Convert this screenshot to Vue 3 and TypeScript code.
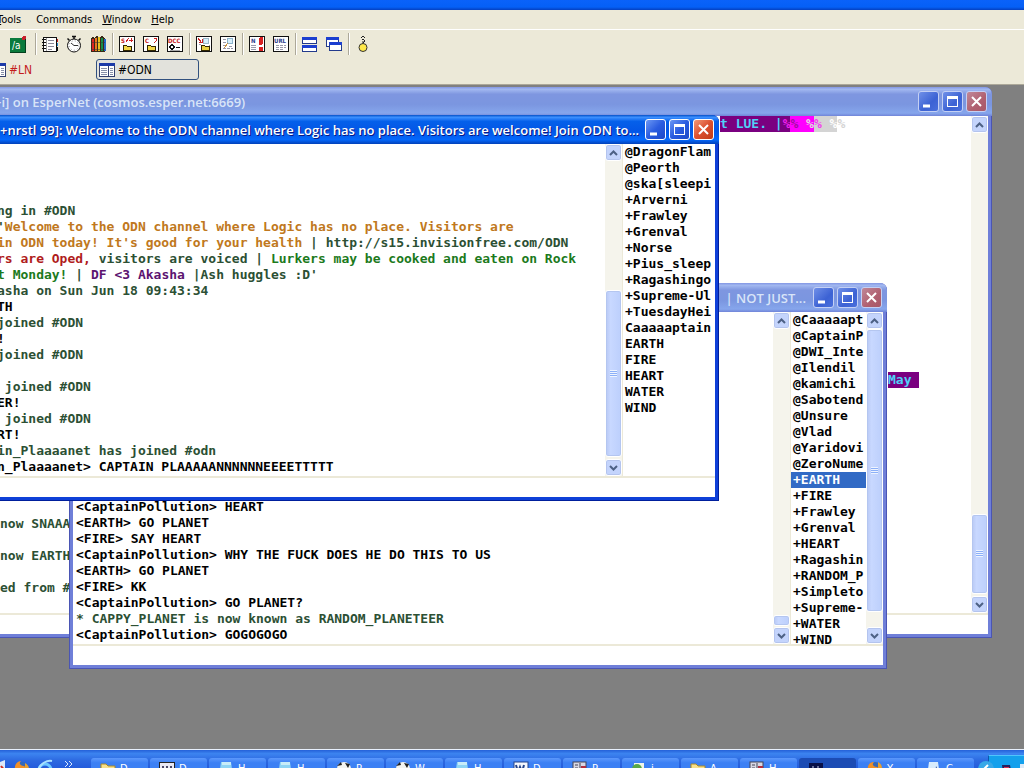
<script setup lang="ts">
interface Seg { t: string; c?: string; indent?: number }
interface Bar { before: number; size: number; after: number; grip: boolean }
interface Win {
  id: string
  title: string
  active: boolean
  lines: Seg[][]
  bar: Bar
  users: string[]
  userBar?: Bar
}

const line = (t = '', c = ''): Seg[] => [{ t, c }]
const green = (t: string) => line(t, 'green')
const blank = (n: number): Seg[][] => Array.from({ length: n }, () => line())

const windows: Win[] = [
  {
    id: 'status',
    title: '+i] on EsperNet (cosmos.esper.net:6669)',
    active: false,
    lines: [
      [
        { t: 't LUE. |', c: 'cy-pu', indent: 720 },
        { t: '%', c: 'ma-pu' },
        { t: '% ', c: 'pu-ma' },
        { t: '%', c: 'gr-ma' },
        { t: '% ', c: 'ma-gr' },
        { t: '%', c: 'wh-gr' },
        { t: '%', c: 'gr-wh' },
      ],
      ...blank(15),
      [{ t: 'May ', c: 'cy-pu', indent: 888 }],
      ...blank(8),
      green('now SNAAA'),
      ...blank(1),
      green('now EARTH'),
      ...blank(1),
      green('ed from #'),
      ...blank(1),
    ],
    bar: { before: 384, size: 79, after: 2, grip: true },
    users: [],
  },
  {
    id: 'planet',
    title: '| NOT JUST...',
    active: false,
    lines: [
      line('<CaptainPollution> HEART'),
      line('<EARTH> GO PLANET'),
      line('<FIRE> SAY HEART'),
      line('<CaptainPollution> WHY THE FUCK DOES HE DO THIS TO US'),
      line('<EARTH> GO PLANET'),
      line('<FIRE> KK'),
      line('<CaptainPollution> GO PLANET?'),
      green('* CAPPY_PLANET is now known as RANDOM_PLANETEER'),
      line('<CaptainPollution> GOGOGOGO'),
    ],
    bar: { before: 289, size: 9, after: 1, grip: false },
    users: [
      '@Caaaaapt', '@CaptainP', '@DWI_Inte', '@Ilendil', '@kamichi', '@Sabotend', '@Unsure',
      '@Vlad', '@Yaridovi', '@ZeroNume', '+EARTH', '+FIRE', '+Frawley', '+Grenval', '+HEART',
      '+Ragashin', '+RANDOM_P', '+Simpleto', '+Supreme-', '+WATER', '+WIND',
    ],
    userBar: { before: 0, size: 284, after: 15, grip: true },
  },
  {
    id: 'odn',
    title: '+nrstl 99]: Welcome to the ODN channel where Logic has no place. Visitors are welcome! Join ODN to...',
    active: true,
    lines: [
      green('ng in #ODN'),
      [{ t: "'", c: 'green' }, { t: 'Welcome to the ODN channel where Logic has no place. Visitors are', c: 'orange' }],
      [
        { t: "in ODN today! It's good for your health", c: 'orange' },
        { t: ' | http://s15.invisionfree.com/ODN', c: 'green' },
      ],
      [
        { t: 'rs are Oped,', c: 'red' },
        { t: ' visitors are voiced | ', c: 'green' },
        { t: 'Lurkers may be cooked and eaten on Rock', c: 'leaf' },
      ],
      [
        { t: 't Monday!', c: 'leaf' },
        { t: ' | ', c: 'green' },
        { t: 'DF <3 Akasha', c: 'violet' },
        { t: " |Ash huggles :D'", c: 'green' },
      ],
      green('asha on Sun Jun 18 09:43:34'),
      line('TH'),
      green('joined #ODN'),
      line('!'),
      green('joined #ODN'),
      line(),
      green(' joined #ODN'),
      line('ER!'),
      green(' joined #ODN'),
      line('RT!'),
      green('in_Plaaaanet has joined #odn'),
      line('n_Plaaaanet> CAPTAIN PLAAAAANNNNNNEEEETTTTT'),
    ],
    bar: { before: 130, size: 166, after: 2, grip: true },
    users: [
      '@DragonFlam', '@Peorth', '@ska[sleepi', '+Arverni', '+Frawley', '+Grenval', '+Norse',
      '+Pius_sleep', '+Ragashingo', '+Supreme-Ul', '+TuesdayHei', 'Caaaaaptain', 'EARTH', 'FIRE',
      'HEART', 'WATER', 'WIND',
    ],
  },
]

const tools: string[][] = [
  ['alias'],
  ['book', 'clock', 'crayons'],
  ['send', 'chat', 'dcc'],
  ['received', 'logs'],
  ['notify', 'url'],
  ['tile', 'cascade'],
  ['about'],
]

const tasks = [
  { k: 'folder', t: 'D...' }, { k: 'dev', t: 'D...' }, { k: 'note', t: 'H...' }, { k: 'note', t: 'H...' },
  { k: 'cow', t: 'P...' }, { k: 'cow', t: 'W...' }, { k: 'note', t: 'H...' }, { k: 'word', t: 'D...' },
  { k: 'book', t: 'P...' }, { k: 'green', t: 'i...' }, { k: 'folder', t: 'A...' }, { k: 'book', t: 'H...' },
  { k: 'lue', t: '' }, { k: 'fox', t: 'Y...' }, { k: 'doc', t: 'C...' },
]
</script>

<template>
  <div class="app">
    <div class="appbar"></div>
    <nav class="menu">
      <button type="button"><u>T</u>ools</button>
      <button type="button">Commands</button>
      <button type="button"><u>W</u>indow</button>
      <button type="button"><u>H</u>elp</button>
    </nav>
    <div class="toolbar">
      <div v-for="(group, gi) in tools" :key="gi" class="group">
        <button v-for="k in group" :key="k" type="button" class="tool" :aria-label="k">
          <svg width="18" height="18" viewBox="0 0 18 18" shape-rendering="crispEdges">
            <template v-if="k === 'alias'">
              <rect x="1" y="3" width="15" height="14" rx="1" fill="#0a7a3c" />
              <path d="M1 17h15V4" fill="none" stroke="#04401e" />
              <text x="3" y="14" class="alias">/a</text>
              <circle cx="15" cy="3" r="2" fill="#c8202c" />
            </template>
            <template v-else-if="k === 'book'">
              <rect x="2.5" y="2.5" width="13" height="14" rx="1" fill="#fff" stroke="#111" />
              <path d="M5.500 3v13" stroke="#999" />
              <path d="M7 5.500h6M7 8.500h6M7 11.500h6M7 14.500h4" stroke="#889" />
              <path d="M1 4.500h4M1 7.500h4M1 10.500h4M1 13.500h4" stroke="#111" />
              <path d="M16.500 4v3" stroke="#c22" /><path d="M16.500 8v3" stroke="#2a8ad0" /><path d="M16.500 12v4" stroke="#111" />
            </template>
            <template v-else-if="k === 'clock'">
              <g shape-rendering="auto">
                <path d="M7 1.500h4M9 1v3M2.500 3.500l2 2M15.500 3.500l-2 2" stroke="#111" stroke-width="1.500" />
                <circle cx="9" cy="10.500" r="6.500" fill="#fff" stroke="#111" />
                <path d="M9 10.500h4M9 10.500L6 8" stroke="#333" />
                <circle cx="9" cy="10.500" r="4.700" fill="none" stroke="#999" stroke-dasharray="1 2.200" />
              </g>
            </template>
            <template v-else-if="k === 'crayons'">
              <path d="M2 4l2-3 2 3 1-3h2l1 3 2-3h2l2 3v13H2z" fill="#3a2a18" />
              <path d="M3.500 4v12" stroke="#d22" stroke-width="2" /><path d="M6.500 3v13" stroke="#e87820" stroke-width="2" />
              <path d="M9.500 2v14" stroke="#e8c020" stroke-width="2" /><path d="M12.500 3v13" stroke="#169048" stroke-width="2" />
              <path d="M15.500 4v12" stroke="#2468c8" stroke-width="2" />
              <path d="M2 7.500h14M2 14.500h14" stroke="#333" stroke-opacity=".5" />
            </template>
            <template v-else-if="k === 'tile'">
              <rect x="1.500" y="2.500" width="14" height="6" fill="#fff" stroke="#223a8c" />
              <rect x="1.500" y="10.500" width="14" height="6" fill="#fff" stroke="#223a8c" />
              <path d="M1 3.500h15M1 11.500h15" stroke="#1c3fd0" stroke-width="3" />
            </template>
            <template v-else-if="k === 'cascade'">
              <rect x="1.500" y="2.500" width="12" height="9" fill="#fff" stroke="#223a8c" />
              <path d="M1 3.500h13" stroke="#1c3fd0" stroke-width="3" />
              <rect x="4.500" y="7.500" width="12" height="8" fill="#fff" stroke="#223a8c" />
              <path d="M4 8.500h13" stroke="#1c3fd0" stroke-width="3" />
            </template>
            <template v-else-if="k === 'about'">
              <g shape-rendering="auto">
                <path d="M7 3l2-2 2 2M8 5l1-1 2 2-2 2M9 6v3" fill="none" stroke="#222" />
                <circle cx="9" cy="12.500" r="4" fill="#ffe94a" stroke="#333" />
              </g>
            </template>
            <template v-else>
              <rect x="1.500" y="1.500" width="15" height="15" rx="1" fill="#fff" stroke="#111" />
              <template v-if="k === 'send' || k === 'chat'">
                <text x="3" y="8" class="mini red">{{ k === 'send' ? 'S' : 'C' }}</text>
                <path v-if="k === 'send'" d="M8 7l3-4M11 5h4M13 3v4" stroke="#c22" fill="none" />
                <path v-else d="M12 3h2v3l-2 2" stroke="#c22" fill="none" />
                <path d="M5 10h3l1 1h4v4H5z" fill="#f4d848" stroke="#332800" />
              </template>
              <template v-else-if="k === 'dcc'">
                <text x="2" y="8" class="mini red">DCC</text>
                <circle cx="6" cy="12" r="2" fill="#fff" stroke="#111" stroke-width="1.500" />
                <path d="M10 12.500h4" stroke="#111" />
                <path d="M4 15.500h10" stroke="#aaa" />
              </template>
              <template v-else-if="k === 'received'">
                <path d="M3 3l3 4M7 4v3H4" stroke="#c22" fill="none" />
                <circle cx="11" cy="6" r="3" fill="#d6eefa" stroke="#9ab8c8" />
                <path d="M4 9.500h2M14 10v4" stroke="#99a" />
                <path d="M6 10h3l1 1h4v4H6z" fill="#e8d040" stroke="#332800" />
              </template>
              <template v-else-if="k === 'logs'">
                <path d="M4 4.500h3M4 7.500h3M4 10.500h3M4 13.500h10M10 11.500h4" stroke="#99a" stroke-dasharray="3 1" />
                <circle cx="11" cy="6" r="3" fill="#d6eefa" stroke="#8cb4cc" />
                <path d="M9 8l-4 5" stroke="#c89040" />
              </template>
              <template v-else-if="k === 'notify'">
                <text x="3" y="8" class="mini">N</text>
                <path d="M3 10.500h5M3 12.500h5M3 14.500h5" stroke="#99a" />
                <rect x="11" y="2" width="4" height="8" rx="2" fill="#d82020" />
                <rect x="11" y="12" width="4" height="4" rx="1" fill="#d82020" />
              </template>
              <template v-else>
                <text x="2" y="8" class="mini">URL</text>
                <path d="M4 10.500h10M4 12.500h10M4 14.500h8" stroke="#99a" stroke-dasharray="3 1" />
              </template>
            </template>
          </svg>
        </button>
      </div>
    </div>
    <div class="switchbar">
      <button v-for="n in ['#LN', '#ODN']" :key="n" type="button" class="tab" :class="{ on: n === '#ODN' }">
        <svg width="16" height="14" viewBox="0 0 16 14" shape-rendering="crispEdges">
          <rect x=".5" y=".5" width="15" height="13" fill="#fff" stroke="#33406e" />
          <rect width="16" height="3" fill="#1c3aa8" />
          <path d="M2 5.500h6M2 7.500h6M2 9.500h6M2 11.500h6M11 5.500h3M11 7.500h3M11 9.500h3M11 11.500h3" stroke="#8890a8" />
          <path d="M9.500 3v11" stroke="#33406e" />
        </svg>
        {{ n }}
      </button>
    </div>

    <main class="desktop">
      <section v-for="w in windows" :key="w.id" class="win" :class="[w.id, { active: w.active }]">
        <header class="title">
          <span class="caption">{{ w.title }}</span>
          <button type="button" class="ctl" aria-label="Minimize">
            <svg width="19" height="19" viewBox="0 0 19 19"><path d="M4 14h7" stroke="#fff" stroke-width="3" /></svg>
          </button>
          <button type="button" class="ctl" aria-label="Maximize">
            <svg width="19" height="19" viewBox="0 0 19 19" shape-rendering="crispEdges">
              <rect x="4.500" y="4.500" width="10" height="10" fill="none" stroke="#fff" /><path d="M4 5.500h11" stroke="#fff" stroke-width="3" />
            </svg>
          </button>
          <button type="button" class="ctl close" aria-label="Close">
            <svg width="19" height="19" viewBox="0 0 19 19"><path d="M5 5l9 9M14 5l-9 9" stroke="#fff" stroke-width="2" /></svg>
          </button>
        </header>
        <div class="body">
          <div class="log">
            <p v-for="(l, i) in w.lines" :key="i"><span
              v-for="(s, j) in l" :key="j" :class="s.c"
              :style="s.indent ? { marginLeft: s.indent + 'px' } : undefined"
            >{{ s.t }}</span></p>
          </div>
          <template v-for="(b, bi) in [w.bar, w.userBar]" :key="bi">
            <ul v-if="bi === 1 && w.users.length" class="users">
              <li v-for="u in w.users" :key="u" :class="{ sel: w.id === 'planet' && u === '+EARTH' }">{{ u }}</li>
            </ul>
            <div v-if="b" class="scroll">
              <button type="button" class="arrow" aria-label="Scroll up">
                <svg width="9" height="6" viewBox="0 0 9 6"><path d="M1 5l3.500-3.500L8 5" fill="none" stroke="#4d6185" stroke-width="2" /></svg>
              </button>
              <div class="track">
                <i :style="{ flexGrow: b.before }"></i>
                <div class="thumb" :style="{ flexGrow: b.size }"><span v-if="b.grip"></span></div>
                <i :style="{ flexGrow: b.after }"></i>
              </div>
              <button type="button" class="arrow" aria-label="Scroll down">
                <svg width="9" height="6" viewBox="0 0 9 6"><path d="M1 1l3.500 3.500L8 1" fill="none" stroke="#4d6185" stroke-width="2" /></svg>
              </button>
            </div>
          </template>
        </div>
        <input class="entry" type="text" aria-label="Message" />
      </section>
    </main>

    <footer class="taskbar">
      <div class="quick">
        <svg width="80" height="18" viewBox="0 0 80 18">
          <path d="M0 4l5-2v16H0z" fill="#dce8f8" /><path d="M1 8l4 5" stroke="#d03020" stroke-width="2" />
          <circle cx="22" cy="11" r="7" fill="#3468b8" /><path d="M15 12c-1-6 3-9 6-9-3 3 0 5 3 5 2 1 2 4 0 6z" fill="#f09028" /><path d="M25 5c4 2 5 6 3 10l-3-3z" fill="#e8a030" />
          <circle cx="45" cy="12" r="6" fill="none" stroke="#6cc8ff" stroke-width="3" /><path d="M38 12c3-7 9-10 14-9" fill="none" stroke="#a8e0ff" stroke-width="2" />
          <path d="M65 3l3 3-3 3M69 3l3 3-3 3" fill="none" stroke="#d8e8ff" />
        </svg>
      </div>
      <button v-for="(t, i) in tasks" :key="i" type="button" class="task" :class="{ on: t.k === 'lue' }">
        <svg width="16" height="16" viewBox="0 0 16 16">
          <path v-if="t.k === 'folder'" d="M1 3h5l2 2h7v10H1z" fill="#f8e08a" stroke="#a8882c" />
          <template v-else-if="t.k === 'note'"><path d="M3 1h10l2 14H1z" fill="#8ed4f4" /><path d="M4 1h9v3H4z" fill="#c8ecf8" /></template>
          <template v-else-if="t.k === 'cow'"><ellipse cx="8" cy="8" rx="7" ry="7" fill="#f4f4f0" /><path d="M1 5l4-4 1 3zM9 2l5 1-2 4zM5 7h2v3H5z" fill="#222" /></template>
          <template v-else-if="t.k === 'word'"><rect x="1" y="1" width="14" height="14" fill="#f4f8ff" stroke="#24448c" /><path d="M3 4l2 7 2-5 2 5 2-7" fill="none" stroke="#24448c" stroke-width="2" /></template>
          <template v-else-if="t.k === 'green'"><path d="M3 2h10v14H3z" fill="#f0f4e8" /><circle cx="6" cy="8" r="5" fill="#58a848" /><path d="M6 8h8" stroke="#fff" stroke-width="2" /></template>
          <template v-else-if="t.k === 'fox'"><circle cx="8" cy="8" r="7" fill="#3468b8" /><path d="M1 9c-1-6 3-8 6-8-3 3 0 5 3 5 2 1 2 4 0 6z" fill="#f09028" /><path d="M11 1c4 2 5 6 3 10l-3-3z" fill="#e8a030" /></template>
          <template v-else-if="t.k === 'dev'"><rect x=".5" y="1.500" width="15" height="14" fill="#e8e8f4" stroke="#222" /><path d="M4 5v7M8 5v7M12 5v7" stroke="#484868" stroke-width="2" /></template>
          <template v-else-if="t.k === 'lue'"><rect x="1" y="2" width="14" height="14" fill="#081048" /><path d="M5 5v7M10 5v7" stroke="#c8d0f0" /></template>
          <template v-else-if="t.k === 'doc'"><path d="M3 1h9l2 14H1z" fill="#d8ecfc" /><path d="M10 5l5 10H9z" fill="#284a98" /></template>
          <template v-else><rect x="1" y="1" width="13" height="14" fill="#d8d8e4" stroke="#445" /><path d="M8 2v12" stroke="#445" /><path d="M9 6h5" stroke="#b03040" stroke-width="2" /><path d="M3 4h3M3 7h3" stroke="#445" /></template>
        </svg>
        {{ t.t }}
      </button>
      <div class="tray">
        <svg width="37" height="16" viewBox="0 0 37 16">
          <path d="M13 3h8l2 10h-9z" fill="#28205c" /><path d="M15 6h5" stroke="#e03050" stroke-width="2" />
          <path d="M31 2h6v14h-6z" fill="#dceaf8" />
        </svg>
      </div>
      <button type="button" class="chev" aria-label="Show hidden icons">
        <svg width="14" height="14" viewBox="0 0 14 14"><path d="M9 3L5 7l4 4" fill="none" stroke="#fff" stroke-width="2" /></svg>
      </button>
    </footer>
  </div>
</template>

<style>
html, body { margin: 0; height: 100%; overflow: hidden; }
</style>

<style scoped>
.app {
  height: 100vh;
  display: flex;
  flex-direction: column;
  overflow: hidden;
  background: #ece9d8;
  font-family: "DejaVu Sans Condensed", "DejaVu Sans", sans-serif;
  font-size: 11px;
  color: #000;
}
button { border: 0; padding: 0; margin: 0; background: none; font: inherit; color: inherit; }
svg { display: block; flex: none; }
.appbar { flex: none; height: 10px; background: linear-gradient(#0a62fa, #0560f6 70%, #0540c0); }
.menu {
  flex: none;
  height: 20px;
  display: flex;
  gap: 10px;
  align-items: center;
  margin-left: -3px;
  border-bottom: 1px solid #fff;
  box-sizing: border-box;
}
.menu button:first-child { margin-right: 5px; }
.toolbar { flex: none; height: 28px; display: flex; align-items: center; padding-left: 6px; }
.group { display: flex; }
.group:first-child { padding-right: 3px; }
.group + .group { border-left: 1px solid #aca899; box-shadow: inset 1px 0 #fff; margin-left: 2px; padding-left: 2px; }
.tool { width: 24px; height: 22px; display: grid; place-items: center; }
.mini { font: bold 6px "DejaVu Sans Condensed", sans-serif; fill: #2c3c8c; }
.mini.red { fill: #c82020; }
.alias { font: 10px "DejaVu Sans Condensed", sans-serif; fill: #fff; }

.switchbar { flex: none; height: 27px; display: flex; gap: 2px; align-items: center; box-sizing: border-box; padding-bottom: 3px; border-bottom: 1px solid #aca899; margin-left: -13px; }
.tab {
  width: 107px;
  height: 21px;
  box-sizing: border-box;
  display: flex;
  align-items: center;
  gap: 3px;
  padding: 0 3px;
  font-size: 12px;
  color: #c41c1c;
}
.tab.on { width: 103px; color: #000; background: #e2e2dc; border: 1px solid #31507f; border-radius: 3px; padding: 0 2px; }

.desktop { flex: 1; position: relative; overflow: hidden; background: #808080; }
.win {
  --edge: #6f7fd8;
  --dark: #4a55b4;
  position: absolute;
  display: flex;
  flex-direction: column;
  background: var(--edge);
  border-radius: 7px 7px 0 0;
  overflow: hidden;
  box-shadow: inset -1px -1px var(--dark), inset 1px 0 var(--dark);
}
.win.active { --edge: #0f40d8; --dark: #001f9c; }
.status { left: -10px; top: 2px; width: 1002px; height: 551px; }
.planet { left: 69px; top: 198px; width: 818px; height: 386px; }
.odn { left: -7px; top: 30px; width: 726px; height: 386px; }

.title {
  flex: none;
  height: 29px;
  box-sizing: border-box;
  display: flex;
  align-items: center;
  gap: 3px;
  padding: 0 5px 0 4px;
  background: linear-gradient(#8296e4, #a2b8f0 8%, #7e96e0 25%, #7b96e0 60%, #86a6ec 90%, #7084d8);
  color: #d8e4f8;
  font: 600 13px "Open Sans", "Noto Sans", sans-serif;
}
.active .title {
  background: linear-gradient(#0450c8, #3c90ff 8%, #0560ea 22%, #0356e6 55%, #0468fc 85%, #0240b8);
  color: #fff;
  text-shadow: 1px 1px #0a1883;
}
.caption { flex: 1; overflow: hidden; white-space: nowrap; padding-left: 3px; }
.status .caption { padding-left: 0; }
.planet .caption { text-align: right; padding-right: 4px; }
.ctl {
  width: 21px;
  height: 21px;
  box-sizing: border-box;
  border: 1px solid #c4d0f4;
  border-radius: 3px;
  background: linear-gradient(135deg, #7090e8, #3c62d4 60%, #4a70dc);
}
.ctl.close { background: linear-gradient(135deg, #c08898, #b06070 60%, #a85868); }
.active .ctl { border-color: #fff; background: linear-gradient(135deg, #6c98f4, #2a5ce0 50%, #1c48c8); }
.active .ctl.close { background: linear-gradient(135deg, #f09878, #dc5030 50%, #c03c18); }

.body { flex: 1; min-height: 0; display: flex; margin: 0 4px; background: #fff; overflow: hidden; }
.log, .users {
  font: bold 13px/16px "DejaVu Sans Mono", monospace;
  white-space: pre;
  overflow: hidden;
}
.log { flex: 1; min-width: 0; display: flex; flex-direction: column; justify-content: flex-end; padding-bottom: 1px; }
.status .log { padding-left: 6px; }
.planet .log { padding-left: 3px; }
.log p { margin: 0; height: 16px; flex: none; }
.log span { display: inline-block; height: 16px; vertical-align: top; }
.users { width: 90px; margin: 0; padding: 0; list-style: none; border-left: 1px solid #ece9d8; }
.odn .users { width: 92px; }
.planet .users { width: 75px; }
.users li { height: 16px; padding-left: 2px; overflow: hidden; }
.sel { background: #316ac5; color: #fff; }
.green { color: #2c5034; }
.orange { color: #c07820; }
.red { color: #b01c1c; }
.leaf { color: #1c7a1c; }
.violet { color: #5c1470; }
.cy-pu { background: #7a0080; color: #50d0f8; }
.ma-pu { background: #7a0080; color: #f020f0; }
.pu-ma { background: #ff00ff; color: #a010a0; }
.gr-ma { background: #ff00ff; color: #e0e0e0; }
.ma-gr { background: #d4d4d4; color: #f040f0; }
.wh-gr { background: #d4d4d4; color: #fff; }
.gr-wh { color: #d4d4d4; }

.scroll { flex: none; width: 17px; display: flex; flex-direction: column; background: #f5f4ec; }
.arrow {
  flex: none;
  height: 17px;
  box-sizing: border-box;
  display: grid;
  place-items: center;
  background: #c4d4fc;
  border: 1px solid #fff;
  border-radius: 3px;
  box-shadow: inset 0 0 0 1px #b4c4ee;
}
.track { flex: 1; display: flex; flex-direction: column; }
.track i { flex-basis: 0; flex-shrink: 1; }
.thumb {
  flex-basis: 0;
  box-sizing: border-box;
  border: 1px solid #fff;
  border-radius: 3px;
  background: linear-gradient(90deg, #b8c8f4, #c8d8ff 30%, #bccffc);
  box-shadow: inset 0 0 0 1px #b4c6f0;
  display: grid;
  place-items: center;
}
.thumb span { width: 7px; height: 7px; background: repeating-linear-gradient(#eef4ff 0 1px, #8cb0f8 1px 2px); }
.entry {
  flex: none;
  height: 21px;
  box-sizing: border-box;
  margin: 0 4px 4px;
  padding: 0 2px;
  border: 0;
  border-top: 2px solid #ece9d8;
  border-radius: 0;
  background: #fff;
  font: bold 13px "DejaVu Sans Mono", monospace;
  outline: 0;
}

.taskbar {
  flex: none;
  position: relative;
  height: 19px;
  box-sizing: border-box;
  display: flex;
  overflow: hidden;
  border-top: 1px solid #e8f0fc;
  background: linear-gradient(#2460d8, #3c84f0 20%, #2c68e0 60%, #245cdc);
}
.quick { flex: none; width: 91px; padding-top: 8px; box-sizing: border-box; }
.task {
  flex: 0 1 57px;
  height: 24px;
  box-sizing: border-box;
  margin: 8px 2px 0 0;
  padding: 3px 0 0 9px;
  display: flex;
  align-items: flex-start;
  gap: 4px;
  overflow: hidden;
  line-height: 16px;
  color: #fff;
  border-radius: 3px;
  background: linear-gradient(#5c98fc, #3c80f4 20%, #3c80f4);
}
.task.on { background: #1c4cb4; }
.tray { flex: 1; margin: 5px 0 0 12px; padding-top: 6px; height: 24px; background: #14a0ec; border-left: 1px solid #0c58b0; border-top: 1px solid #50c4fc; overflow: hidden; }
.chev { position: absolute; right: 30px; top: 11px; width: 16px; height: 16px; border-radius: 8px; background: #38a8e8; display: grid; place-items: center; }
</style>
